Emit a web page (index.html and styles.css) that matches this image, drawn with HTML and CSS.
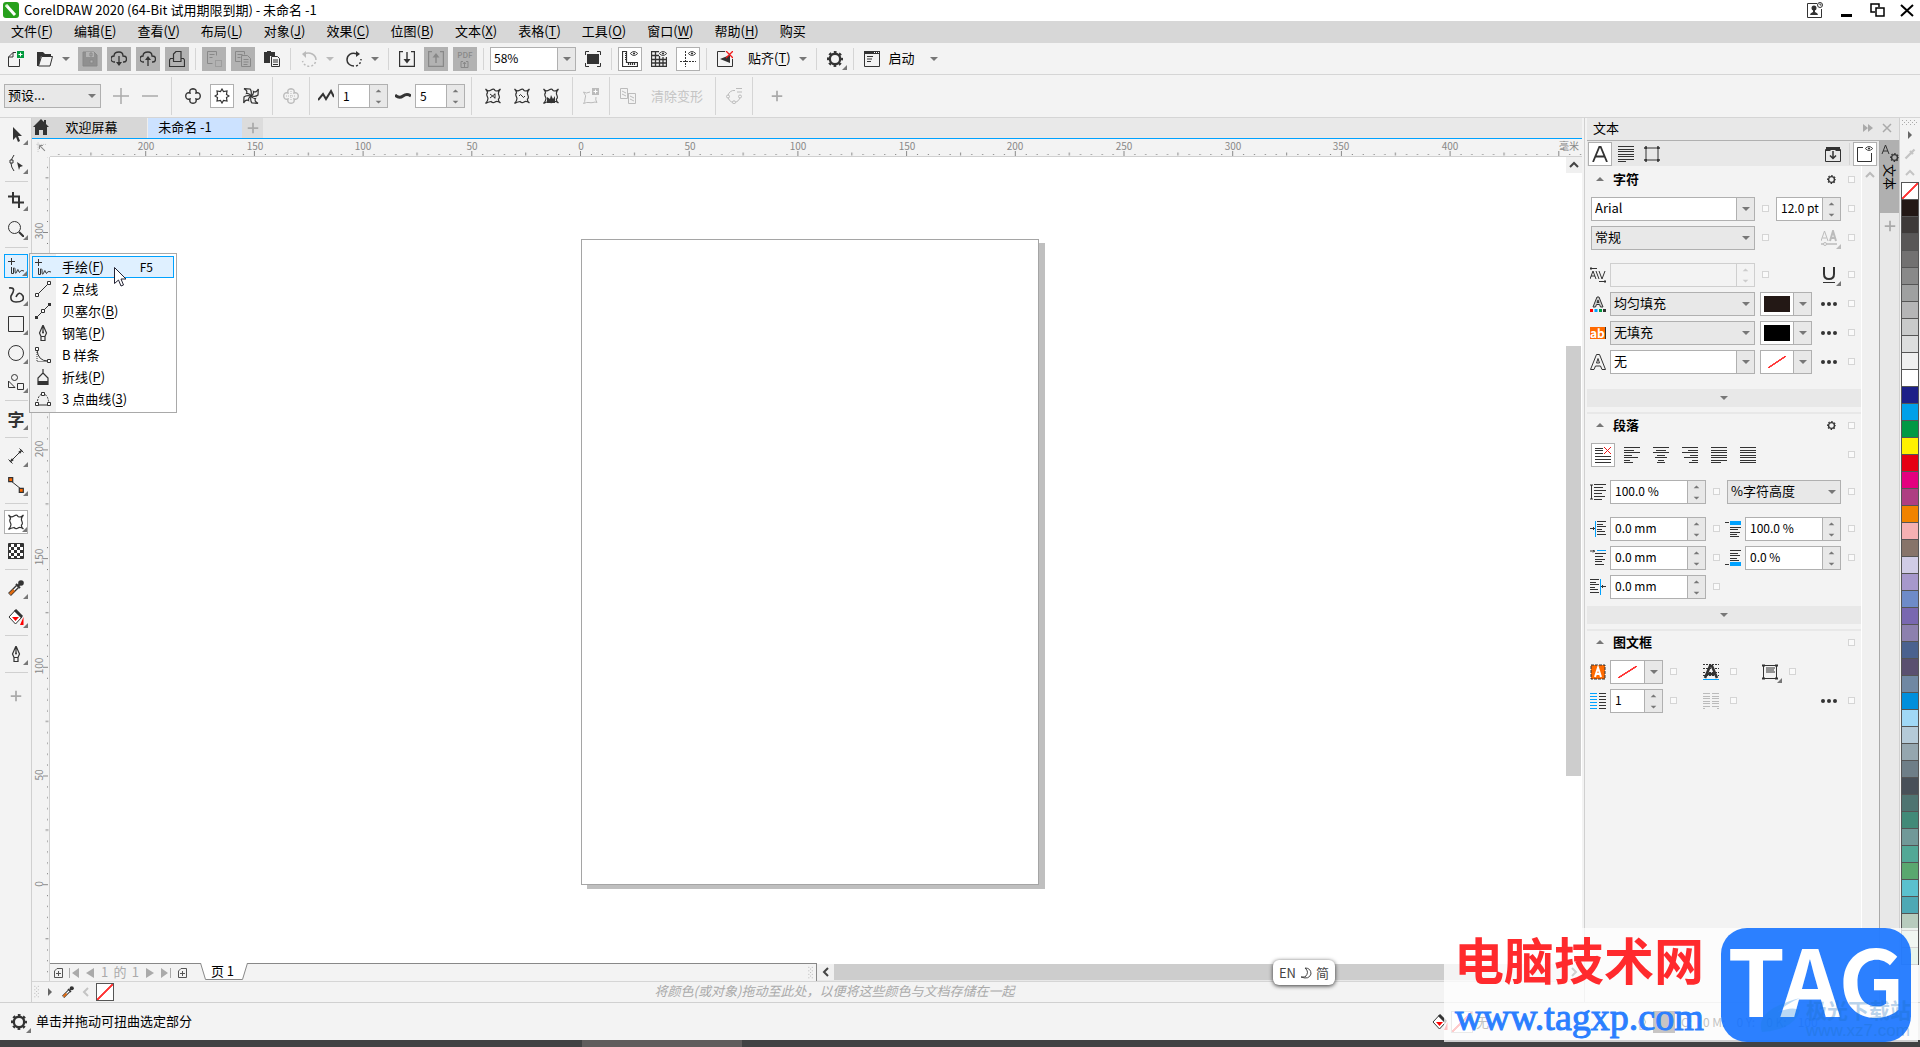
FILE: index.html
```html
<!DOCTYPE html>
<html lang="zh-CN">
<head>
<meta charset="utf-8">
<title>CorelDRAW 2020 (64-Bit 试用期限到期) - 未命名 -1</title>
<link rel="stylesheet" href="styles.css">
</head>
<body>
<svg class="sprite" aria-hidden="true">
  <symbol id="new" viewBox="0 0 16 16"><path d="M8 1.500H5L.5 6v9.500h11V8M5 1.500V6H.5" fill="none" stroke="currentColor"/><path d="M9 0h7v7H9z" fill="#009a3d"/><path d="M12.500 1.500v4M10.500 3.500h4" stroke="#fff"/></symbol>
  <symbol id="open" viewBox="0 0 16 16"><path d="M0 15V1h6l2 2h6v2H4L2 15z" fill="currentColor"/><path d="M4.500 5.500h11l-2.500 9.500H1.500z" fill="#f3f3f3" stroke="currentColor"/></symbol>
  <symbol id="save" viewBox="0 0 16 16"><path d="M1 1h11l3 3v11H1z" fill="#909090" stroke="currentColor"/><path d="M4 1h8v5H4z" fill="#b2b2b2"/><path d="M8 9h3v3H8zM8 2h2v3H8z" fill="#b2b2b2" stroke="currentColor"/></symbol>
  <symbol id="clouddown" viewBox="0 0 16 16"><path d="M4 11H3a3 3 0 0 1 0-6c0-3 2-4 5-4s4 2 4 4c5 0 4 6 1 6h-1M8 5v9" fill="none" stroke="currentColor" stroke-width="1.300"/><path d="M5 11h6l-3 4z" fill="currentColor"/></symbol>
  <symbol id="cloudup" viewBox="0 0 16 16"><path d="M4 11H3a3 3 0 0 1 0-6c0-3 2-4 5-4s4 2 4 4c5 0 4 6 1 6h-1M8 8v7" fill="none" stroke="currentColor" stroke-width="1.300"/><path d="M5 9h6L8 5z" fill="currentColor"/></symbol>
  <symbol id="print" viewBox="0 0 16 16"><path d="M4.500 10.500V3L7 .5h5v10M4.500 7.500h-3L.5 9v6.500h15V9l-1-1.500H12M4 10.500h8.500" fill="none" stroke="currentColor" stroke-width="1.200"/></symbol>
  <symbol id="cut" viewBox="0 0 16 16"><path d="M1.500.5h9v4M1.500.5v12h5M3.500 3.500h5M3.500 6.500h3" fill="none" stroke="currentColor"/><path d="M9.500 9.500h6v6h-6z" fill="none" stroke="currentColor" stroke-dasharray="1 1"/></symbol>
  <symbol id="copy" viewBox="0 0 16 16"><path d="M.5.5h9v3M.5.500v10h5M2.500 3.500h5M2.500 6.500h3M6.500 4.500h6l3 3v8h-9zM8.500 8.500h5M8.500 11h5M8.500 13.500h4" fill="none" stroke="currentColor"/></symbol>
  <symbol id="paste" viewBox="0 0 16 16"><path d="M0 1h3V0h4v1h4v4H6v7H0z" fill="currentColor"/><path d="M7.500 5.500h6l2 2v8h-8zM9 9h5M9 11h5M9 13.500h5" fill="none" stroke="currentColor"/></symbol>
  <symbol id="undo" viewBox="0 0 16 16"><path d="M3 3c6-3 12 1 12 6" fill="none" stroke="currentColor" stroke-width="1.500"/><path d="M14.500 11c-2 6-11 6-13-1" fill="none" stroke="currentColor" stroke-width="1.500" stroke-dasharray="2 2"/><path d="M5 0v7L1 3z" fill="currentColor"/></symbol>
  <symbol id="redo" viewBox="0 0 16 16"><path d="M11 3C5 1 1 4 1 9c0 4 4 6 7 6" fill="none" stroke="currentColor" stroke-width="1.500"/><path d="M10 15c3-1 5-3 5-7" fill="none" stroke="currentColor" stroke-width="1.500" stroke-dasharray="2 2"/><path d="M10 0v6l4-3z" fill="currentColor"/></symbol>
  <symbol id="import" viewBox="0 0 16 16"><path d="M4 .5H.5v15h15V.5H12M8 1v10" fill="none" stroke="currentColor" stroke-width="1.400"/><path d="M4.500 8h7L8 12.500z" fill="currentColor"/></symbol>
  <symbol id="export" viewBox="0 0 16 16"><path d="M4 .5H.5v15h15V.5H12M8 12V4" fill="none" stroke="currentColor" stroke-width="1.400"/><path d="M4.500 6.500h7L8 2z" fill="currentColor"/></symbol>
  <symbol id="full" viewBox="0 0 16 16"><path d="M2 3h12v10H2z" fill="currentColor"/><path d="M.5 4V.5H4M12 .5h3.500V4M15.500 12v3.500H12M4 15.500H.5V12" fill="none" stroke="currentColor"/></symbol>
  <symbol id="eye" viewBox="0 0 8 5"><path d="M.3 2.500Q4-1.500 7.700 2.500 4 6.500.300 2.500z" fill="none" stroke="currentColor" stroke-width=".9"/><circle cx="4" cy="2.500" r="1.100" fill="currentColor"/></symbol>
  <symbol id="rulers" viewBox="0 0 16 16"><path d="M.5.5h4v11h11v4H.5zM3 2.500h2M3 4.500h2M3 6.500h2M3 8.500h2M6.500 12v2M8.500 12v2M10.500 12v2M12.500 12v2" fill="none" stroke="currentColor" stroke-width="1.200"/><use href="#eye" x="8" y="0" width="8" height="5"/></symbol>
  <symbol id="grid" viewBox="0 0 16 16"><path d="M0 .5h8M0 4.500h8M0 8.500h16M0 12h16M0 15.500h16M.5 0v16M4.500 0v16M8.500 5v11M12 6v10M15.500 6v10" fill="none" stroke="currentColor" stroke-width="1.300"/><use href="#eye" x="8" y="0" width="8" height="5"/></symbol>
  <symbol id="guides" viewBox="0 0 16 16"><path d="M5.500 0v16M0 10.500h16" fill="none" stroke="currentColor" stroke-dasharray="2 1"/><use href="#eye" x="8" y="0" width="8" height="5"/></symbol>
  <symbol id="snapoff" viewBox="0 0 16 16"><path d="M8 .5H.5v15h15V8" fill="none" stroke="currentColor"/><path d="M3 8l10-4v8z" fill="currentColor"/><path d="M9 0l7 7M16 0L9 7" stroke="#f01818" stroke-width="1.300"/></symbol>
  <symbol id="gear" viewBox="0 0 16 16"><circle cx="8" cy="8" r="5.200" fill="none" stroke="currentColor" stroke-width="2.400"/><circle cx="8" cy="8" r="6.900" fill="none" stroke="currentColor" stroke-width="2.200" stroke-dasharray="2.700 2.720" stroke-dashoffset="1.350"/></symbol>
  <symbol id="launch" viewBox="0 0 16 16"><path d="M.5.5h15v15H.5z" fill="none" stroke="currentColor"/><path d="M0 0h16v3H0z" fill="currentColor"/><path d="M10 1.500h1m1 0h1m1 0h1" stroke="#fff"/><path d="M3 5.500h6M3 8h5M3 10.500h4" stroke="currentColor"/></symbol>
  <symbol id="plus" viewBox="0 0 16 16"><path d="M8 2v12M2 8h12" stroke="currentColor" stroke-width="2"/></symbol>
  <symbol id="plusthin" viewBox="0 0 16 16"><path d="M8 0v16M0 8h16" stroke="currentColor" stroke-width="1.500"/></symbol>
  <symbol id="minus" viewBox="0 0 16 16"><path d="M0 8h16" stroke="currentColor" stroke-width="1.500"/></symbol>
  <symbol id="push" viewBox="0 0 16 16"><path d="M5 5Q4 1 8 .7 12 1 11 5q4-1 4.300 3-.3 4-4.300 3 1 4-3 4.300Q4 15 5 11 1 12 .7 8 1 4 5 5z" fill="none" stroke="currentColor" stroke-width="1.400"/></symbol>
  <symbol id="zip" viewBox="0 0 16 16"><path d="M8 1l1.500 2.500L13 3l-.5 3.500L15 8l-2.500 1.500L13 13l-3.500-.5L8 15l-1.500-2.500L3 13l.5-3.500L1 8l2.500-1.500L3 3l3.500.5z" fill="none" stroke="currentColor" stroke-width="1.200"/></symbol>
  <symbol id="twist" viewBox="0 0 16 16"><g fill="none" stroke="currentColor" stroke-width="1.200"><path id="blade" d="M8 8Q9 3 7 1L1 .7q4 2 2.500 4.800Q6 5 8 8"/><path d="M8 8Q9 3 7 1L1 .7q4 2 2.500 4.800Q6 5 8 8" transform="rotate(90 8 8)"/><path d="M8 8Q9 3 7 1L1 .7q4 2 2.500 4.800Q6 5 8 8" transform="rotate(180 8 8)"/><path d="M8 8Q9 3 7 1L1 .7q4 2 2.500 4.800Q6 5 8 8" transform="rotate(270 8 8)"/></g></symbol>
  <symbol id="center" viewBox="0 0 16 16"><use href="#push" width="16" height="16"/><path d="M8 3v10M3 8h10" stroke="currentColor" stroke-dasharray="1 1"/></symbol>
  <symbol id="amp" viewBox="0 0 16 16"><path d="M0 12l5-6 3 5 5-8 3 6" fill="none" stroke="currentColor" stroke-width="2"/></symbol>
  <symbol id="freq" viewBox="0 0 16 16"><path d="M0 7q4 4 8 1t8 0" fill="none" stroke="currentColor" stroke-width="3"/></symbol>
  <symbol id="blob" viewBox="0 0 16 16"><path d="M.5 1Q3 4 6 2T10 2.500Q13 4 15.500 1 12.500 4 13.800 7T13.500 11Q13 13 15.500 15 12 12.500 10 14T6 13.500Q3 14 .5 15.500 4 12 2.500 9T2.500 5Q2.500 3 .5 1z" fill="none" stroke="currentColor" stroke-width="1.200"/></symbol>
  <symbol id="rand" viewBox="0 0 16 16"><use href="#blob" width="16" height="16"/><path d="M5 6l5 4M5 10l5-4M10 5.500v5" stroke="currentColor"/></symbol>
  <symbol id="smooth" viewBox="0 0 16 16"><use href="#blob" width="16" height="16"/><path d="M5 8q1.500-3 3 0t3 0" fill="none" stroke="currentColor"/></symbol>
  <symbol id="local" viewBox="0 0 16 16"><use href="#blob" width="16" height="16"/><path d="M4 15V9l3 2 1-4 2 4 2-3v7z" fill="currentColor"/></symbol>
  <symbol id="addblob" viewBox="0 0 16 16"><path d="M.5 4Q3 6 7 4M.5 4Q4 8 2 11q0 3-1.500 4.500Q4 14 6 14.500t4 0q2-1 4 0Q12 12 13 9" fill="none" stroke="currentColor"/><path d="M9 0h7v7H9z" fill="currentColor"/><path d="M12.500 1.500v4M10.500 3.500h4" stroke="#fff"/></symbol>
  <symbol id="copyfx" viewBox="0 0 16 16"><path d="M.5.5h7v10h-7zM8 5.500h7.500v10h-7V5.500M2 3l4 2M2 6l4 2M10 8l4 2M10 11l4 2" fill="none" stroke="currentColor"/></symbol>
  <symbol id="convert" viewBox="0 0 16 16"><path d="M9 2.500A6 6 0 1 0 14 8.500M10 .5h6M11 4h5" fill="none" stroke="currentColor"/><circle cx="2" cy="8.500" r="1.500" fill="#f3f3f3" stroke="currentColor"/><circle cx="8" cy="14.300" r="1.500" fill="#f3f3f3" stroke="currentColor"/><circle cx="14" cy="8.500" r="1.500" fill="#f3f3f3" stroke="currentColor"/></symbol>
  <symbol id="pick" viewBox="0 0 16 16"><path d="M5 1v13l3-3 2 5 2-1-2-5h4z" fill="currentColor"/></symbol>
  <symbol id="shape" viewBox="0 0 16 16"><path d="M6 0Q0 8 6 16" fill="none" stroke="currentColor"/><path d="M2 5h3v3H2z" fill="#f3f3f3" stroke="currentColor"/><path d="M9 7l6 4-3 1-1 3z" fill="currentColor"/></symbol>
  <symbol id="crop" viewBox="0 0 16 16"><path d="M5 0v10.500h11M0 4.500h11V16" fill="none" stroke="currentColor" stroke-width="2"/></symbol>
  <symbol id="zoom" viewBox="0 0 16 16"><circle cx="6.500" cy="6.500" r="6" fill="none" stroke="currentColor"/><path d="M11 11l5 5" stroke="currentColor" stroke-width="2"/></symbol>
  <symbol id="freehand" viewBox="0 0 16 16"><path d="M3.500 0v7M0 3.500h7M3.500 9v6.500h2V10q2-1 1.500 4 1 3 2-1 1-3 1.500 0 1 3 2 0 1-1 3.500 0" fill="none" stroke="currentColor"/></symbol>
  <symbol id="artistic" viewBox="0 0 16 16"><path d="M1 1q8-1 2 8-1 6 5 6 9 0 7-6-4-6-7 1" fill="none" stroke="currentColor" stroke-width="1.600"/></symbol>
  <symbol id="rect" viewBox="0 0 16 16"><path d="M.5.5h15v15H.5z" fill="none" stroke="currentColor"/></symbol>
  <symbol id="ellipse" viewBox="0 0 16 16"><circle cx="8" cy="8" r="7.500" fill="none" stroke="currentColor"/></symbol>
  <symbol id="shapes" viewBox="0 0 16 16"><circle cx="6.500" cy="3.500" r="3" fill="none" stroke="currentColor"/><path d="M.5 7v6.500H7zM9.500 9.500h6v6h-6z" fill="none" stroke="currentColor"/></symbol>
  <symbol id="dim" viewBox="0 0 16 16"><path d="M2 14L14 2M.5 11.500l4 4M11.500.5l4 4M2 14l2-3.500M2 14l3.500-2M14 2l-3.500 2M14 2l-2 3.500" fill="none" stroke="currentColor"/></symbol>
  <symbol id="connector" viewBox="0 0 16 16"><path d="M3 4l10 8" stroke="currentColor"/><path d="M.7.700h4v4h-4zM11.300 11.300h4v4h-4z" fill="#ff6a00" stroke="currentColor" stroke-width="1.200"/></symbol>
  <symbol id="checker" viewBox="0 0 16 16"><path d="M.5.5h15v15H.5z" fill="#fff" stroke="currentColor"/><path d="M0 2.500h16M0 8.500h16M0 14.500h16" stroke="currentColor" stroke-width="3" stroke-dasharray="3 3"/><path d="M3 5.500h13M3 11.500h13" stroke="currentColor" stroke-width="3" stroke-dasharray="3 3"/></symbol>
  <symbol id="dropper" viewBox="0 0 16 16"><path d="M1.500 14.500l8-8" stroke="currentColor" stroke-width="4"/><path d="M2 14l8-8" stroke="#fff" stroke-width="1.500"/><path d="M2 14l4-4" stroke="#e06a10" stroke-width="2.500"/><path d="M8 4l4 4M10 6l3-3" stroke="currentColor" stroke-width="2"/><circle cx="13" cy="3" r="2.800" fill="currentColor"/></symbol>
  <symbol id="dropperflat" viewBox="0 0 16 16"><path d="M2 14l8-8M8 4l4 4M10 6l4-4" stroke="currentColor" stroke-width="3"/></symbol>
  <symbol id="bucket" viewBox="0 0 16 16"><path d="M7.500 1L14 8l-6.500 7L1 8z" fill="#fff" stroke="currentColor"/><path d="M7 1l7 7" stroke="currentColor" stroke-width="3"/><path d="M4 8h7l-3.500 4z" fill="#f00"/><path d="M15.500 8v8H12z" fill="#f00"/></symbol>
  <symbol id="nib" viewBox="0 0 16 16"><path d="M8 0L4.500 8 6 11.500h4L11.500 8zM8 1v6M6 11.500v4h4v-4" fill="none" stroke="currentColor" stroke-width="1.200"/><circle cx="8" cy="7.500" r="1" fill="currentColor"/></symbol>
  <symbol id="line2" viewBox="0 0 16 16"><path d="M3 13L13 3" stroke="currentColor"/><path d="M.5 12.500h3v3h-3zM12.500.5h3v3h-3z" fill="#fff" stroke="currentColor"/></symbol>
  <symbol id="bezier" viewBox="0 0 16 16"><path d="M2 14L14 2" stroke="currentColor"/><path d="M0 13h3v3H0zM13 0h3v3h-3z" fill="currentColor"/><path d="M6.500 6.500h3v3h-3z" fill="#fff" stroke="currentColor"/></symbol>
  <symbol id="bspline" viewBox="0 0 16 16"><path d="M2 3q1 11 11 11" fill="none" stroke="currentColor"/><path d="M2 3v11.500h11" fill="none" stroke="currentColor" stroke-dasharray="1 1"/><path d="M.5.5h3v3h-3zM12.500 12.500h3v3h-3z" fill="#fff" stroke="currentColor"/></symbol>
  <symbol id="polyline" viewBox="0 0 16 16"><path d="M8 0v4L3 9v6.500h10V9L8 4" fill="none" stroke="currentColor" stroke-width="1.200"/><path d="M3 12h10v4H3z" fill="currentColor"/></symbol>
  <symbol id="curve3" viewBox="0 0 16 16"><path d="M2 13Q3 3 8 3t6 10" fill="none" stroke="currentColor" stroke-dasharray="2 1"/><path d="M3 14h10" stroke="currentColor"/><path d="M.5 11.500h3v3h-3zM12.500 11.500h3v3h-3zM6.500 1.500h3v3h-3z" fill="#fff" stroke="currentColor"/></symbol>
  <symbol id="home" viewBox="0 0 16 16"><path d="M8 0L0 8h2v8h4v-5h4v5h4V8h2l-3-3V1h-2v2z" fill="currentColor"/></symbol>
  <symbol id="origin" viewBox="0 0 16 16"><path d="M3 1v14M1 3.500h14" stroke="currentColor" stroke-dasharray="1 2"/><path d="M5 5l8 8M5 5v5M5 5h5" stroke="currentColor" stroke-width="1.500" fill="none"/></symbol>
  <symbol id="chevup" viewBox="0 0 10 10"><path d="M1 7l4-4 4 4" fill="none" stroke="currentColor" stroke-width="2"/></symbol>
  <symbol id="chevleft" viewBox="0 0 10 10"><path d="M7 1L3 5l4 4" fill="none" stroke="currentColor" stroke-width="2"/></symbol>
  <symbol id="chevright" viewBox="0 0 10 10"><path d="M3 1l4 4-4 4" fill="none" stroke="currentColor" stroke-width="2"/></symbol>
  <symbol id="triright" viewBox="0 0 10 10"><path d="M3 1v8l4-4z" fill="currentColor"/></symbol>
  <symbol id="prev" viewBox="0 0 12 12"><path d="M10 1v10L2 6z" fill="currentColor"/></symbol>
  <symbol id="next" viewBox="0 0 12 12"><path d="M2 1v10l8-5z" fill="currentColor"/></symbol>
  <symbol id="first" viewBox="0 0 12 12"><path d="M11 1v10L4 6zM1 1h1v10H1z" fill="currentColor"/></symbol>
  <symbol id="last" viewBox="0 0 12 12"><path d="M1 1v10l7-5zM10 1h1v10h-1z" fill="currentColor"/></symbol>
  <symbol id="addpage" viewBox="0 0 12 12"><path d="M5 1.500h5.500v9h-8V4zM6.500 4v5M4 6.500h5" fill="none" stroke="currentColor"/></symbol>
  <symbol id="bigA" viewBox="0 0 16 16"><path d="M1 16L7.300 1h1.400L15 16M3.500 10.500h9" fill="none" stroke="currentColor" stroke-width="1.800"/></symbol>
  <symbol id="para" viewBox="0 0 16 16"><path d="M0 .5h16M0 3.500h16M0 5.500h16M0 8.500h16M0 10.500h16M0 13.500h16M0 15.500h8" stroke="currentColor"/></symbol>
  <symbol id="frame" viewBox="0 0 16 16"><path d="M2 2h12v12H2z" fill="none" stroke="currentColor"/><path d="M0 2h3M2 0v3M13 2h3M14 0v3M0 14h3M2 13v3M13 14h3M14 13v3" stroke="currentColor" stroke-width="1.500"/></symbol>
  <symbol id="dockin" viewBox="0 0 16 16"><path d="M.5 3.500h15v12H.5z" fill="none" stroke="currentColor"/><path d="M1 1h14v4h-4L9 3H7L5 5H1z" fill="currentColor"/><path d="M8 5v7M5 9.500l3 3 3-3" fill="none" stroke="currentColor" stroke-width="1.500"/></symbol>
  <symbol id="boxeye" viewBox="0 0 16 16"><path d="M6 1.500H.5v14h14V7" fill="none" stroke="currentColor"/><use href="#eye" x="8" y="0" width="8" height="5"/></symbol>
  <symbol id="kern" viewBox="0 0 16 16"><path d="M0 12L3 4l3 8M1 9h4M9 4l3 8 3-8M6 4l3 8M0 1.500h7M1.500 0L0 1.500 1.500 3M16 14.500H9M14.500 13l1.500 1.500-1.500 1.500" fill="none" stroke="currentColor"/></symbol>
  <symbol id="fillA" viewBox="0 0 16 16"><path d="M3 11L7 1h2l4 10h-2.500L9.500 8.500h-3L5.500 11zM7 6.500h2L8 4z" fill="#ccc" stroke="currentColor"/><path d="M0 13h3v3H0z" fill="#f00"/><path d="M4.500 13h3v3h-3z" fill="#00a2ff"/><path d="M9 13h3v3H9z" fill="#009a3d"/><path d="M13 13h3v3h-3z" fill="#333"/></symbol>
  <symbol id="lineA" viewBox="0 0 16 16"><path d="M.5 15.500L6.500.5h3l6 15h-3.500L10.500 12h-5L4 15.500zM6.500 9h3L8 4.500z" fill="none" stroke="currentColor"/></symbol>
  <symbol id="under" viewBox="0 0 16 16"><path d="M3 0v7q0 5 5 5t5-5V0" fill="none" stroke="currentColor" stroke-width="2"/><path d="M2 15.500h12" stroke="currentColor"/></symbol>
  <symbol id="AA" viewBox="0 0 16 16"><path d="M0 11L3.500 1 7 11M1.500 8h4" fill="none" stroke="currentColor"/><path d="M9 11l3-10 3 10M10 8h4" fill="none" stroke="currentColor" stroke-width="2"/><path d="M0 14h16" stroke="currentColor" stroke-width="1.500"/><circle cx="4" cy="14" r="1.500" fill="#f3f3f3" stroke="currentColor"/></symbol>
  <symbol id="dots" viewBox="0 0 16 16"><circle cx="2" cy="8" r="2" fill="currentColor"/><circle cx="8" cy="8" r="2" fill="currentColor"/><circle cx="14" cy="8" r="2" fill="currentColor"/></symbol>
  <symbol id="alnone" viewBox="0 0 16 16"><path d="M0 1.500h8M0 3.500h8M0 6.500h8M0 9.500h16M0 12.500h16M0 15.500h16" stroke="currentColor"/><path d="M9 0l7 7M16 0L9 7" stroke="#f01818"/></symbol>
  <symbol id="alleft" viewBox="0 0 16 16"><path d="M0 .5h16M0 3.500h10M0 5.500h16M0 8.500h8M0 10.500h14M0 13.500h6M0 15.500h9" stroke="currentColor"/></symbol>
  <symbol id="alcenter" viewBox="0 0 16 16"><path d="M0 .5h16M3 3.500h10M0 5.500h16M4 8.500h8M2 10.500h12M5 13.500h6M4 15.500h8" stroke="currentColor"/></symbol>
  <symbol id="alright" viewBox="0 0 16 16"><path d="M0 .5h16M6 3.500h10M0 5.500h16M8 8.500h8M2 10.500h14M10 13.500h6M7 15.500h9" stroke="currentColor"/></symbol>
  <symbol id="alfull" viewBox="0 0 16 16"><path d="M0 .5h16M0 3.500h16M0 5.500h16M0 8.500h16M0 10.500h16M0 13.500h16M0 15.500h10" stroke="currentColor"/></symbol>
  <symbol id="alforce" viewBox="0 0 16 16"><path d="M0 .5h16M0 3.500h16M0 5.500h16M0 8.500h16M0 10.500h16M0 13.500h16M0 15.500h16" stroke="currentColor"/></symbol>
  <symbol id="leading" viewBox="0 0 16 16"><path d="M1.500 1v14M0 1h3M0 15h3M4 .5h12M4 3.500h9M4 6.500h12M4 9.500h8M4 12.500h11M4 15.500h8" fill="none" stroke="currentColor"/></symbol>
  <symbol id="indl" viewBox="0 0 16 16"><path d="M7 .5h9M7 3.500h6M7 5.500h9M7 8.500h5M7 10.500h8M7 13.500h9M0 7.500h5M3 6l1.500 1.500L3 9" fill="none" stroke="currentColor"/><path d="M5.500 0v16" stroke="#00a2ff"/></symbol>
  <symbol id="indf" viewBox="0 0 16 16"><path d="M5 3.500h11M5 6.500h8M5 9.500h10M5 11.500h7M5 14.500h9M0 1h5M3 0l1.500 1L3 2.500" fill="none" stroke="currentColor"/><path d="M7 .5h9" stroke="#00a2ff"/></symbol>
  <symbol id="indr" viewBox="0 0 16 16"><path d="M0 .5h9M0 3.500h6M0 5.500h9M0 8.500h5M0 10.500h8M0 13.500h9M11 7.500h5M13 6l-1.500 1.500L13 9" fill="none" stroke="currentColor"/><path d="M10.500 0v16" stroke="#00a2ff"/></symbol>
  <symbol id="spb" viewBox="0 0 16 16"><path d="M5 6.500h11M5 8.500h8M5 11.500h10M5 13.500h7M5 15.500h9M0 1.500h4" stroke="currentColor"/><path d="M5 0h11v4H5z" fill="#00a2ff"/></symbol>
  <symbol id="spa" viewBox="0 0 16 16"><path d="M5 .5h11M5 3.500h8M5 5.500h10M5 8.500h7M5 10.500h9M0 14.500h4" stroke="currentColor"/><path d="M5 12h11v4H5z" fill="#00a2ff"/></symbol>
  <symbol id="frfill" viewBox="0 0 16 16"><path d="M1 1h14v14H1z" fill="#ff6a00" stroke="currentColor" stroke-dasharray="3 1"/><path d="M5 13L8 3.500 11 13M6 10h4" fill="none" stroke="#fff" stroke-width="2"/></symbol>
  <symbol id="baseA" viewBox="0 0 16 16"><path d="M0 .5h16M0 4.500h16M0 8.500h16M0 11.500h16" stroke="currentColor" stroke-dasharray="2 1"/><path d="M2 14L7 2h2l5 12M4 10h8" fill="none" stroke="currentColor" stroke-width="2.600"/><path d="M0 15.500h16" stroke="#00a2ff"/></symbol>
  <symbol id="valign" viewBox="0 0 16 16"><path d="M1.500 1.500h13v13h-13zM4 4h9M4 6h8M4 8h9" fill="none" stroke="currentColor"/><path d="M0 1.500h3M13 1.500h3M0 14.500h3M13 14.500h3" stroke="currentColor" stroke-width="2"/></symbol>
  <symbol id="cols" viewBox="0 0 16 16"><path d="M0 .5h7M0 3.500h7M0 6.500h7M0 9.500h7M0 12.500h7M0 15.500h7" stroke="#00a2ff"/><path d="M9 .5h7M9 3.500h7M9 6.500h7M9 9.500h7M9 12.500h7M9 15.500h7" stroke="currentColor"/></symbol>
  <symbol id="cols2" viewBox="0 0 16 16"><path d="M0 .5h7M0 3.500h7M0 5.500h7M0 8.500h7M0 10.500h7M0 13.500h7M0 15.500h2M9 .5h7M9 3.500h7M9 5.500h7M9 8.500h7M9 10.500h7M9 13.500h7M14 15.500h2" stroke="currentColor"/></symbol>
  <symbol id="tri" viewBox="0 0 8 4"><path d="M0 0h8L4 4z" fill="currentColor"/></symbol>
  <symbol id="triup" viewBox="0 0 8 4"><path d="M0 4h8L4 0z" fill="currentColor"/></symbol>
  <symbol id="spin" viewBox="0 0 18 22"><path d="M6 7h6L9 4zM6 16h6l-3 3z" fill="currentColor"/></symbol>
  <symbol id="user" viewBox="0 0 16 16"><path d="M10 1.500H.5v14h14V7" fill="none" stroke="currentColor"/><circle cx="7" cy="6" r="2.500" fill="currentColor"/><path d="M3 13q0-2 3-3V8h2v2q3 1 3 3z" fill="currentColor"/><circle cx="13" cy="3" r="2.500" fill="#fff" stroke="currentColor"/><path d="M13 1.500V3h1.500" fill="none" stroke="currentColor"/></symbol>
  <symbol id="grip" viewBox="0 0 6 16"><path d="M.5 1v15M4.500 1v15" stroke="currentColor" stroke-dasharray="1 3"/><path d="M2.500 3v12" stroke="currentColor" stroke-dasharray="1 3"/></symbol>
</svg>

<header class="titlebar">
  <svg class="logo" viewBox="0 0 16 16"><rect width="16" height="16" rx="3" fill="#27a01c"/><path d="M3 3l9 10" stroke="#fff" stroke-width="3"/><path d="M2.500 2.500l3 1-2 2z" fill="#d8f5d0"/></svg>
  <h1>CorelDRAW 2020 (64-Bit 试用期限到期) - 未命名 -1</h1>
  <div class="winbtns">
    <button aria-label="用户"><svg class="i"><use href="#user"/></svg></button>
    <button aria-label="最小化"><svg class="i" viewBox="0 0 16 16"><path d="M3 13.500h11" stroke="#000" stroke-width="3"/></svg></button>
    <button aria-label="还原"><svg class="i" viewBox="0 0 16 16"><path d="M6 10H2V2h8v3M7 6h8v8H7z" fill="none" stroke="#000" stroke-width="1.500"/></svg></button>
    <button aria-label="关闭"><svg class="i" viewBox="0 0 16 16"><path d="M1 3l12 11M13 3L1 14" stroke="#000" stroke-width="2"/></svg></button>
  </div>
</header>

<nav class="menubar">
  <a href="#">文件(<u>F</u>)</a><a href="#">编辑(<u>E</u>)</a><a href="#">查看(<u>V</u>)</a><a href="#">布局(<u>L</u>)</a><a href="#">对象(<u>J</u>)</a><a href="#">效果(<u>C</u>)</a><a href="#">位图(<u>B</u>)</a><a href="#">文本(<u>X</u>)</a><a href="#">表格(<u>T</u>)</a><a href="#">工具(<u>O</u>)</a><a href="#">窗口(<u>W</u>)</a><a href="#">帮助(<u>H</u>)</a><a href="#">购买</a>
</nav>

<div class="toolbar std">
  <button class="b" aria-label="新建"><svg class="i"><use href="#new"/></svg></button>
  <button class="b" aria-label="打开"><svg class="i"><use href="#open"/></svg></button>
  <button class="caret" aria-label="最近文件"><svg><use href="#tri"/></svg></button>
  <button class="b dark off" aria-label="保存"><svg class="i"><use href="#save"/></svg></button>
  <button class="b dark" aria-label="从云打开"><svg class="i"><use href="#clouddown"/></svg></button>
  <button class="b dark" aria-label="保存到云"><svg class="i"><use href="#cloudup"/></svg></button>
  <button class="b dark" aria-label="打印"><svg class="i"><use href="#print"/></svg></button>
  <i class="sep"></i>
  <button class="b dark off" aria-label="剪切"><svg class="i"><use href="#cut"/></svg></button>
  <button class="b dark off" aria-label="复制"><svg class="i"><use href="#copy"/></svg></button>
  <button class="b" aria-label="粘贴"><svg class="i"><use href="#paste"/></svg></button>
  <i class="sep"></i>
  <button class="b faint" aria-label="撤消"><svg class="i"><use href="#undo"/></svg></button>
  <button class="caret faint" aria-label="撤消列表"><svg><use href="#tri"/></svg></button>
  <button class="b" aria-label="重做"><svg class="i"><use href="#redo"/></svg></button>
  <button class="caret" aria-label="重做列表"><svg><use href="#tri"/></svg></button>
  <i class="sep"></i>
  <button class="b" aria-label="导入"><svg class="i"><use href="#import"/></svg></button>
  <button class="b dark off" aria-label="导出"><svg class="i"><use href="#export"/></svg></button>
  <button class="b dark off pdf" aria-label="发布为 PDF"><span>PDF</span><svg viewBox="0 0 10 8"><path d="M3 1.500H1v6h7v-6H6M4.500 7V2M3 4l1.500-2L6 4" fill="none" stroke="currentColor"/></svg></button>
  <i class="sep"></i>
  <div class="combo split zoomlevel"><select aria-label="缩放级别"><option>58%</option></select><span><svg><use href="#tri"/></svg></span></div>
  <button class="b" aria-label="全屏预览"><svg class="i"><use href="#full"/></svg></button>
  <i class="sep"></i>
  <button class="b on" aria-label="显示标尺"><svg class="i"><use href="#rulers"/></svg></button>
  <button class="b" aria-label="显示网格"><svg class="i"><use href="#grid"/></svg></button>
  <button class="b on" aria-label="显示辅助线"><svg class="i"><use href="#guides"/></svg></button>
  <i class="sep"></i>
  <button class="b" aria-label="关闭贴齐"><svg class="i"><use href="#snapoff"/></svg></button>
  <button class="t snap">贴齐(<u>T</u>)</button>
  <button class="caret" aria-label="贴齐选项"><svg><use href="#tri"/></svg></button>
  <i class="sep"></i>
  <button class="b fly" aria-label="选项"><svg class="i"><use href="#gear"/></svg></button>
  <i class="sep"></i>
  <button class="b" aria-label="应用程序"><svg class="i"><use href="#launch"/></svg></button>
  <button class="t launch">启动</button>
  <button class="caret" aria-label="启动列表"><svg><use href="#tri"/></svg></button>
</div>

<div class="toolbar prop">
  <div class="combo preset"><select aria-label="预设"><option>预设...</option></select><span><svg><use href="#tri"/></svg></span></div>
  <button class="b grey ml" aria-label="添加预设"><svg class="i"><use href="#plusthin"/></svg></button>
  <button class="b grey" aria-label="删除预设"><svg class="i"><use href="#minus"/></svg></button>
  <i class="sep ml mr"></i>
  <button class="b" aria-label="推拉变形"><svg class="i"><use href="#push"/></svg></button>
  <button class="b on" aria-label="拉链变形"><svg class="i"><use href="#zip"/></svg></button>
  <button class="b" aria-label="扭曲变形"><svg class="i"><use href="#twist"/></svg></button>
  <i class="sep ml"></i>
  <button class="b faint" aria-label="居中变形"><svg class="i"><use href="#center"/></svg></button>
  <i class="sep"></i>
  <label class="spinfield"><svg class="i"><use href="#amp"/></svg><span class="num"><input value="1" aria-label="拉链振幅"><svg><use href="#spin"/></svg></span></label>
  <label class="spinfield"><svg class="i"><use href="#freq"/></svg><span class="num"><input value="5" aria-label="拉链频率"><svg><use href="#spin"/></svg></span></label>
  <i class="sep mr"></i>
  <button class="b" aria-label="随机变形"><svg class="i"><use href="#rand"/></svg></button>
  <button class="b" aria-label="平滑变形"><svg class="i"><use href="#smooth"/></svg></button>
  <button class="b" aria-label="局限变形"><svg class="i"><use href="#local"/></svg></button>
  <i class="sep ml"></i>
  <button class="b faint" aria-label="添加新的变形"><svg class="i"><use href="#addblob"/></svg></button>
  <i class="sep"></i>
  <button class="b faint" aria-label="复制变形属性"><svg class="i"><use href="#copyfx"/></svg></button>
  <button class="t padded" disabled>清除变形</button>
  <i class="sep"></i>
  <button class="b faint" aria-label="转换为曲线"><svg class="i"><use href="#convert"/></svg></button>
  <i class="sep mr"></i>
  <button class="b grey ml" aria-label="自定义"><svg class="i small"><use href="#plus"/></svg></button>
</div>

<main class="work">
  <aside class="toolbox">
    <button class="b fly" aria-label="选择工具"><svg class="i"><use href="#pick"/></svg></button>
    <button class="b fly" aria-label="形状工具"><svg class="i"><use href="#shape"/></svg></button>
    <hr>
    <button class="b fly" aria-label="裁剪工具"><svg class="i"><use href="#crop"/></svg></button>
    <button class="b fly" aria-label="缩放工具"><svg class="i"><use href="#zoom"/></svg></button>
    <hr>
    <div class="flyhost">
      <button class="b fly hot" aria-label="手绘工具"><svg class="i"><use href="#freehand"/></svg></button>
      <ul class="flyout">
        <li class="sel"><svg class="i"><use href="#freehand"/></svg><a href="#">手绘(<u>F</u>)</a><kbd>F5</kbd></li>
        <li><svg class="i"><use href="#line2"/></svg><a href="#">2 点线</a></li>
        <li><svg class="i"><use href="#bezier"/></svg><a href="#">贝塞尔(<u>B</u>)</a></li>
        <li><svg class="i"><use href="#nib"/></svg><a href="#">钢笔(<u>P</u>)</a></li>
        <li><svg class="i"><use href="#bspline"/></svg><a href="#">B 样条</a></li>
        <li><svg class="i"><use href="#polyline"/></svg><a href="#">折线(<u>P</u>)</a></li>
        <li><svg class="i"><use href="#curve3"/></svg><a href="#">3 点曲线(<u>3</u>)</a></li>
      </ul>
      <svg class="cursor" viewBox="0 0 13 20"><path d="M.5.5v16l4-3.500 2.500 6 2.500-1-2.500-6h5z" fill="#fff" stroke="#223"/></svg>
    </div>
    <button class="b fly" aria-label="艺术笔"><svg class="i"><use href="#artistic"/></svg></button>
    <button class="b fly" aria-label="矩形工具"><svg class="i"><use href="#rect"/></svg></button>
    <button class="b fly" aria-label="椭圆形工具"><svg class="i"><use href="#ellipse"/></svg></button>
    <button class="b fly" aria-label="常见形状"><svg class="i"><use href="#shapes"/></svg></button>
    <hr>
    <button class="b fly glyph" aria-label="文本工具">字</button>
    <hr>
    <button class="b fly" aria-label="平行度量"><svg class="i"><use href="#dim"/></svg></button>
    <button class="b fly" aria-label="连接器"><svg class="i"><use href="#connector"/></svg></button>
    <hr>
    <button class="b fly on" aria-label="变形工具"><svg class="i"><use href="#blob"/></svg></button>
    <button class="b" aria-label="透明度工具"><svg class="i"><use href="#checker"/></svg></button>
    <hr>
    <button class="b fly" aria-label="颜色滴管"><svg class="i"><use href="#dropper"/></svg></button>
    <button class="b fly" aria-label="填充工具"><svg class="i"><use href="#bucket"/></svg></button>
    <hr>
    <button class="b fly" aria-label="轮廓笔"><svg class="i"><use href="#nib"/></svg></button>
    <hr>
    <button class="b grey add" aria-label="自定义工具箱"><svg class="i small"><use href="#plus"/></svg></button>
  </aside>

  <section class="doc">
    <div class="tabs">
      <button class="home" aria-label="主页"><svg class="i"><use href="#home"/></svg></button>
      <button class="tab">欢迎屏幕</button>
      <button class="tab active">未命名 -1</button>
      <button class="tabadd" aria-label="新建标签"><svg class="i small"><use href="#plus"/></svg></button>
    </div>
    <div class="stage">
      <svg class="corner"><use href="#origin" x="4" y="3" width="11" height="11"/></svg>
      <svg class="hruler">
        <defs><pattern id="ht" x="530" y="0" width="108.700" height="18" patternUnits="userSpaceOnUse"><path d="M.5 12v5M54.500 13.500v3" stroke="#888"/><path d="M10.900 15.500h1m9.870 0h1m9.870 0h1m9.870 0h1m20.700 0h1m9.870 0h1m9.870 0h1m9.870 0h1" stroke="#777"/></pattern></defs>
        <rect width="100%" height="18" fill="url(#ht)"/>
        <g class="nums"><text x="96" y="11">200</text><text x="205" y="11">150</text><text x="313" y="11">100</text><text x="422" y="11">50</text><text x="531" y="11">0</text><text x="640" y="11">50</text><text x="748" y="11">100</text><text x="857" y="11">150</text><text x="965" y="11">200</text><text x="1074" y="11">250</text><text x="1183" y="11">300</text><text x="1291" y="11">350</text><text x="1400" y="11">400</text><text x="1519" y="11">毫米</text></g>
      </svg>
      <svg class="vruler">
        <defs><pattern id="vt" x="0" y="75" width="18" height="108.700" patternUnits="userSpaceOnUse"><path d="M11 .5h5M13.500 54.500h3" stroke="#888"/><path d="M15.500 10.900v1m0 9.870v1m0 9.870v1m0 9.870v1m0 20.700v1m0 9.870v1m0 9.870v1m0 9.870v1" stroke="#777"/></pattern></defs>
        <rect width="18" height="100%" fill="url(#vt)"/>
        <g class="nums"><text transform="translate(11 74) rotate(-90)">300</text><text transform="translate(11 183) rotate(-90)">250</text><text transform="translate(11 292) rotate(-90)">200</text><text transform="translate(11 400) rotate(-90)">150</text><text transform="translate(11 509) rotate(-90)">100</text><text transform="translate(11 618) rotate(-90)">50</text><text transform="translate(11 727) rotate(-90)">0</text></g>
      </svg>
      <div class="canvas"><div class="page"></div></div>
      <div class="vscroll"><button aria-label="向上"><svg><use href="#chevup"/></svg></button><i></i></div>
      <div class="bottom">
        <div class="pages">
          <button class="d" aria-label="在前添加页"><svg><use href="#addpage"/></svg></button>
          <button aria-label="首页"><svg><use href="#first"/></svg></button>
          <button aria-label="上一页"><svg><use href="#prev"/></svg></button>
          <div class="count"><span>1</span><span>的</span><span>1</span></div>
          <button aria-label="下一页"><svg><use href="#next"/></svg></button>
          <button aria-label="末页"><svg><use href="#last"/></svg></button>
          <button class="d" aria-label="在后添加页"><svg><use href="#addpage"/></svg></button>
          <button class="pagetab"><svg viewBox="0 0 49 18"><path d="M.5 0l5 16.500h37L47.500 0" fill="#fff" stroke="#888"/></svg><span>页 1</span></button>
          <svg class="grip"><use href="#grip"/></svg>
        </div>
        <div class="hscroll"><button aria-label="向左"><svg><use href="#chevleft"/></svg></button><i></i><button aria-label="向右"><svg><use href="#chevright"/></svg></button></div>
      </div>
    </div>
    <div class="docpal">
      <svg class="grip"><use href="#grip"/></svg>
      <button aria-label="调色板选项"><svg class="g7"><use href="#triright"/></svg></button>
      <button aria-label="滴管"><svg class="drop"><use href="#dropper"/></svg></button>
      <button aria-label="向左滚动"><svg class="gc"><use href="#chevleft"/></svg></button>
      <button class="none" aria-label="无填充"></button>
      <p>将颜色(或对象)拖动至此处，以便将这些颜色与文档存储在一起</p>
    </div>
  </section>

  <aside class="docker">
    <div class="dhead"><h2>文本</h2><button aria-label="折叠"><svg viewBox="0 0 10 10"><path d="M0 1v8l5-4zM5 1v8l5-4z" fill="#aaa"/></svg></button><button aria-label="关闭泊坞窗"><svg viewBox="0 0 10 10"><path d="M1 1l8 8M9 1L1 9" stroke="#aaa" stroke-width="1.500"/></svg></button></div>
    <div class="dmain">
      <div class="dcontent">
        <div class="dtools">
          <button class="b on" aria-label="字符"><svg class="i"><use href="#bigA"/></svg></button>
          <button class="b" aria-label="段落"><svg class="i"><use href="#para"/></svg></button>
          <button class="b" aria-label="图文框"><svg class="i"><use href="#frame"/></svg></button>
          <button class="b push" aria-label="泊坞窗"><svg class="i"><use href="#dockin"/></svg></button>
          <i class="sep"></i>
          <button class="b on" aria-label="显示选项"><svg class="i"><use href="#boxeye"/></svg></button>
        </div>
        <div class="dscroll">
          <div class="sections">
            <section>
              <h3><svg class="tri"><use href="#triup"/></svg>字符<svg class="g push"><use href="#gear"/></svg><i class="q"></i></h3>
              <div class="row wide"><div class="combo split w164"><select aria-label="字体"><option>Arial</option></select><span><svg><use href="#tri"/></svg></span></div><i class="q"></i><span class="num w65 push"><input value="12.0 pt" aria-label="字号"><svg><use href="#spin"/></svg></span><i class="q"></i></div>
              <div class="row wide"><div class="combo w164"><select aria-label="字体样式"><option>常规</option></select><span><svg><use href="#tri"/></svg></span></div><i class="q"></i><button class="b faint fly push" aria-label="可变字体"><svg class="i"><use href="#AA"/></svg></button><i class="q"></i></div>
              <div class="row gapped"><svg class="i"><use href="#kern"/></svg><span class="num w145 disabled"><input aria-label="字距" disabled><svg><use href="#spin"/></svg></span><i class="q"></i><button class="b fly push" aria-label="下划线"><svg class="i"><use href="#under"/></svg></button><i class="q"></i></div>
              <div class="row"><svg class="i"><use href="#fillA"/></svg><div class="combo w145"><select aria-label="填充类型"><option>均匀填充</option></select><span><svg><use href="#tri"/></svg></span></div><button class="sw" aria-label="文本颜色"><b class="ink"></b><span><svg><use href="#tri"/></svg></span></button><button class="b push" aria-label="填充设置"><svg class="i"><use href="#dots"/></svg></button><i class="q"></i></div>
              <div class="row"><span class="i ab">ab</span><div class="combo w145"><select aria-label="背景填充类型"><option>无填充</option></select><span><svg><use href="#tri"/></svg></span></div><button class="sw" aria-label="文本背景颜色"><b class="black"></b><span><svg><use href="#tri"/></svg></span></button><button class="b push" aria-label="背景设置"><svg class="i"><use href="#dots"/></svg></button><i class="q"></i></div>
              <div class="row"><svg class="i"><use href="#lineA"/></svg><div class="combo split w145"><select aria-label="轮廓宽度"><option>无</option></select><span><svg><use href="#tri"/></svg></span></div><button class="sw" aria-label="轮廓颜色"><b class="slash"></b><span><svg><use href="#tri"/></svg></span></button><button class="b push" aria-label="轮廓设置"><svg class="i"><use href="#dots"/></svg></button><i class="q"></i></div>
              <button class="more gapped" aria-label="更多字符选项"><svg><use href="#tri"/></svg></button>
            </section>
            <section>
              <h3><svg class="tri"><use href="#triup"/></svg>段落<svg class="g push"><use href="#gear"/></svg><i class="q"></i></h3>
              <div class="row wide aligns"><button class="b on" aria-label="无对齐"><svg class="i"><use href="#alnone"/></svg></button><button class="b" aria-label="左对齐"><svg class="i"><use href="#alleft"/></svg></button><button class="b" aria-label="居中"><svg class="i"><use href="#alcenter"/></svg></button><button class="b" aria-label="右对齐"><svg class="i"><use href="#alright"/></svg></button><button class="b" aria-label="两端对齐"><svg class="i"><use href="#alfull"/></svg></button><button class="b" aria-label="强制对齐"><svg class="i"><use href="#alforce"/></svg></button><i class="q push"></i></div>
              <div class="row gapped"><svg class="i"><use href="#leading"/></svg><span class="num w96"><input value="100.0 %" aria-label="行间距"><svg><use href="#spin"/></svg></span><i class="q"></i><div class="combo w114 push"><select aria-label="间距单位"><option>%字符高度</option></select><span><svg><use href="#tri"/></svg></span></div><i class="q"></i></div>
              <div class="row gapped"><svg class="i"><use href="#indl"/></svg><span class="num w96"><input value="0.0 mm" aria-label="左缩进"><svg><use href="#spin"/></svg></span><i class="q"></i><svg class="i push"><use href="#spb"/></svg><span class="num w96"><input value="100.0 %" aria-label="段前间距"><svg><use href="#spin"/></svg></span><i class="q"></i></div>
              <div class="row"><svg class="i"><use href="#indf"/></svg><span class="num w96"><input value="0.0 mm" aria-label="首行缩进"><svg><use href="#spin"/></svg></span><i class="q"></i><svg class="i push"><use href="#spa"/></svg><span class="num w96"><input value="0.0 %" aria-label="段后间距"><svg><use href="#spin"/></svg></span><i class="q"></i></div>
              <div class="row"><svg class="i"><use href="#indr"/></svg><span class="num w96"><input value="0.0 mm" aria-label="右缩进"><svg><use href="#spin"/></svg></span><i class="q"></i></div>
              <button class="more" aria-label="更多段落选项"><svg><use href="#tri"/></svg></button>
            </section>
            <section>
              <h3><svg class="tri"><use href="#triup"/></svg>图文框<i class="q push"></i></h3>
              <div class="row"><svg class="i"><use href="#frfill"/></svg><button class="sw flush" aria-label="图文框填充"><b class="slash"></b><span><svg><use href="#tri"/></svg></span></button><i class="q"></i><button class="b col3" aria-label="与基线对齐"><svg class="i"><use href="#baseA"/></svg></button><i class="q"></i><button class="b fly col4" aria-label="垂直对齐"><svg class="i"><use href="#valign"/></svg></button><i class="q"></i></div>
              <div class="row"><svg class="i"><use href="#cols"/></svg><span class="num w53"><input value="1" aria-label="栏数"><svg><use href="#spin"/></svg></span><i class="q"></i><button class="b faint col3" aria-label="栏宽相等"><svg class="i"><use href="#cols2"/></svg></button><i class="q"></i><button class="b push" aria-label="栏设置"><svg class="i"><use href="#dots"/></svg></button><i class="q"></i></div>
            </section>
          </div>
          <div class="dbar"><svg><use href="#chevup"/></svg></div>
        </div>
      </div>
      <div class="dtabs">
        <button class="dtab"><svg viewBox="0 0 18 18"><path d="M1 10l3.500-9L8 10M2 7h5" fill="none" stroke="#333"/><use href="#gear" x="9" y="9" width="9" height="9"/></svg><span>文本</span></button>
        <button class="dadd" aria-label="添加泊坞窗"><svg class="i small"><use href="#plus"/></svg></button>
      </div>
    </div>
  </aside>

  <aside class="palette">
    <svg class="handle" viewBox="0 0 16 6"><path d="M0 .5h16M0 4.500h16" stroke="#aaa" stroke-dasharray="1 3"/><path d="M2 2.500h14" stroke="#aaa" stroke-dasharray="1 3"/></svg>
    <button aria-label="选项"><svg class="g7"><use href="#triright"/></svg></button>
    <button aria-label="滴管"><svg class="drop gc"><use href="#dropperflat"/></svg></button>
    <button aria-label="向上滚动"><svg class="gc"><use href="#chevup"/></svg></button>
    <div class="swatches"><i class="none"></i><i style="background:#231815"></i><i style="background:#3e3a39"></i><i style="background:#595757"></i><i style="background:#727171"></i><i style="background:#898989"></i><i style="background:#9fa0a0"></i><i style="background:#b5b5b6"></i><i style="background:#c9caca"></i><i style="background:#dcdddd"></i><i style="background:#efefef"></i><i style="background:#fff"></i><i style="background:#1d2088"></i><i style="background:#00a0e9"></i><i style="background:#009944"></i><i style="background:#fff100"></i><i style="background:#e60012"></i><i style="background:#e4007f"></i><i style="background:#ae3f82"></i><i style="background:#f08300"></i><i style="background:#f4b0b2"></i><i style="background:#87746a"></i><i style="background:#d0cce6"></i><i style="background:#a698cc"></i><i style="background:#6e8bc8"></i><i style="background:#7968b0"></i><i style="background:#8c80ae"></i><i style="background:#4b628f"></i><i style="background:#5a5070"></i><i style="background:#7088a3"></i><i style="background:#008fdc"></i><i style="background:#a0d8f6"></i><i style="background:#b5cad8"></i><i style="background:#95a6af"></i><i style="background:#6e7e87"></i><i style="background:#485058"></i><i style="background:#4f7471"></i><i style="background:#428a78"></i><i style="background:#719998"></i><i style="background:#52a896"></i><i style="background:#5aa86f"></i><i style="background:#5bc0ce"></i><i style="background:#4ea8b5"></i><i style="background:#b7cbbd"></i><i style="background:#c4e0cc"></i><i style="background:#a5d8b4"></i></div>
  </aside>
</main>

<footer class="status">
  <button class="b fly" aria-label="状态选项"><svg class="i"><use href="#gear"/></svg></button>
  <span class="hint">单击并拖动可扭曲选定部分</span>
  <div class="objinfo">
    <svg class="i"><use href="#bucket"/></svg><i class="none"></i><span>无</span>
    <svg class="i pen"><use href="#nib"/></svg><i class="grey-sw"></i><span class="cmyk"><span>C:</span><span>0 M:</span><span>0 Y:</span><span>0 K:</span><span>100</span></span>
  </div>
</footer>
<div class="taskbar"><i></i></div>

<div class="ime">EN <svg viewBox="0 0 12 12"><path d="M5 1q5 4 0 9h-4q8 3 10-3Q11 1 5 1z" fill="none" stroke="#444"/></svg> 简</div>

<div class="mark">
  <div class="marktext"><strong>电脑技术网</strong><span>www.tagxp.com</span></div>
  <div class="tag">TAG</div>
  <div class="ghost"><svg viewBox="0 0 44 38"><path d="M2 36Q-6 14 40 2 26 8 18 16q14-6 22-2Q34 34 2 36z" fill="#1a7fe0"/></svg><p><b>极光下载站</b><span>www.xz7.com</span></p></div>
</div>
</body>
</html>
```
FILE: styles.css
```css
* { box-sizing: border-box; }
body {
  margin: 0;
  height: 100vh;
  display: flex;
  flex-direction: column;
  overflow: hidden;
  position: relative;
  background: #f3f3f3;
  color: #000;
  font: 13px/16px "Noto Sans CJK SC", "Noto Sans", sans-serif;
}
.sprite { position: absolute; width: 0; height: 0; }
button { border: 0; padding: 0; background: none; font: inherit; color: inherit; display: flex; align-items: center; justify-content: center; flex: none; }
input, select { font: inherit; color: inherit; border: 0; padding: 0; margin: 0; background: none; min-width: 0; appearance: none; outline: 0; }
select { flex: 1; padding: 0 0 2px 3px; height: 22px; }
input { flex: 1; padding: 0 0 2px 4px; height: 22px; width: 0; font-size: 12px; }
a { color: inherit; text-decoration: none; }
u { text-underline-offset: 2px; }
svg { flex: none; display: block; }
h1, h2, h3, p, ul { margin: 0; padding: 0; font-size: 13px; font-weight: 400; line-height: 16px; }
.i { width: 16px; height: 16px; color: #333; }
.small { width: 14px; height: 14px; }
.push { margin-left: auto !important; }

/* title and menu */
.titlebar { height: 21px; flex: none; background: #fff; display: flex; align-items: center; padding: 0 4px 2px 3px; gap: 5px; }
.logo { width: 16px; height: 16px; }
.winbtns { margin-left: auto; display: flex; gap: 15px; }
.winbtns button { width: 16px; }
.menubar { height: 22px; flex: none; background: #d7d7d7; display: flex; align-items: center; gap: 21px; padding: 0 0 2px 11px; }

/* toolbars */
.toolbar { display: flex; align-items: center; gap: 5px; padding-left: 4px; border-bottom: 1px solid #d5d5d5; flex: none; }
.std { height: 32px; }
.prop { height: 43px; }
.b { width: 24px; height: 24px; position: relative; }
.b.dark { background: #b2b2b2; }
.b.on { background: #fff; border: 1px solid #b0b0b0; }
.b.off, .b.off .i { color: #888; }
.faint .i, .faint svg { color: #bbb; }
.grey .i { color: #aaa; }
.fly::after { content: ""; position: absolute; right: 0; bottom: 1px; border: solid transparent; border-width: 5px 0 0 5px; border-bottom: 0; border-right: 5px solid #777; border-left: 0; }
.faint.fly::after { border-right-color: #bbb; }
.pdf { flex-direction: column; }
.pdf span { font-size: 8px; line-height: 10px; font-weight: 500; }
.pdf svg { width: 10px; height: 8px; }
.sep { width: 3px; height: 22px; flex: none; background: linear-gradient(#d5d5d5, #d5d5d5) center / 1px 100% no-repeat; }
.prop .sep { height: 38px; }
.ml { margin-left: 3px; }
.mr { margin-right: 3px; }
.caret { width: 11px; justify-content: flex-start; color: #777; }
.caret svg, .combo svg, .sw svg { width: 8px; height: 4px; }
.t { padding-bottom: 1px; }
.t.padded { padding: 0 6px 1px; }
.t.snap { padding: 0 3px 1px 6px; }
.t:disabled { color: #c4c4c4; }
.t.launch { padding-right: 10px; }
.combo { height: 24px; border: 1px solid #b0b0b0; background: #e8e8e8; display: flex; flex: none; }
.combo > span { width: 17px; display: flex; align-items: center; justify-content: center; color: #777; }
.combo.split { background: #fff; }
.combo.split > span { background: #e8e8e8; border-left: 1px solid #b0b0b0; width: 18px; }
.zoomlevel { width: 86px; }
.zoomlevel select { font-size: 12px; }
.preset { width: 97px; }
.spinfield { display: flex; align-items: center; }
.spinfield .i { margin-left: 2px; margin-right: 4px; }
.num { width: 50px; height: 24px; border: 1px solid #b0b0b0; background: #fff; display: flex; flex: none; }
.num svg { width: 18px; height: 22px; background: #e8e8e8; border-left: 1px solid #b0b0b0; color: #777; }
.num.disabled { background: #f3f3f3; border-color: #cfcfcf; }
.num.disabled svg { background: #f3f3f3; border-color: #cfcfcf; color: #ccc; }
.w65 { width: 65px; } .w53 { width: 53px; } .w96 { width: 96px; }
.w114 { width: 114px; } .w145 { width: 145px; } .w164 { width: 164px; }

/* work area */
.work { flex: 1; min-height: 0; display: flex; }
.toolbox { width: 32px; border-right: 1px solid #d0d0d0; padding: 2px 4px 0; flex: none; display: flex; flex-direction: column; }
.toolbox .b { margin: 2px 0 3px; flex: none; }
.toolbox hr { margin: 3px -1px 4px 1px; border: 0; height: 1px; background: #d0d0d0; flex: none; }
.toolbox .add { margin-top: 7px; }
.glyph { font-size: 17px; font-weight: 700; color: #333; }
.toolbox .hot { border: 1px solid #00a2ff; background: #dff0ff; }
.flyhost { position: relative; }
.flyout { position: absolute; z-index: 5; left: 25px; top: 1px; width: 148px; list-style: none; border: 1px solid #a9a9a9; padding: 2px; background: linear-gradient(90deg, #f0f0f0 26px, #fff 26px); }
.flyout li { height: 22px; display: flex; align-items: center; padding: 0 0 1px 2px; border: 1px solid transparent; }
.flyout li a { margin-left: 11px; }
.flyout .sel { border-color: #00a2ff; background: #dff0ff; }
.flyout kbd { font: inherit; font-size: 12px; margin-left: auto; padding-right: 20px; }
.cursor { position: absolute; z-index: 6; left: 110px; top: 15px; width: 13px; height: 20px; }

.doc { flex: 1; min-width: 0; display: flex; flex-direction: column; padding-right: 5px; background: linear-gradient(#d0d0d0, #d0d0d0) right 2px top / 1px 100% no-repeat; }
.tabs { height: 22px; flex: none; display: flex; background: #e9e9e9; border-bottom: 1px solid #00a2ff; margin-top: -1px; border-top: 1px solid #d5d5d5; }
.tabs button { background: #d7d7d7; padding-bottom: 2px; }
.home { width: 18px; }
.tabs .tab { width: 97px; padding-right: 14px; }
.tabs .tab.active { width: 95px; padding-right: 20px; background: #cce2ff; border-left: 1px solid #eee; }
.tabs .tabadd { width: 21px; background: #dcdcdc; padding: 0; }
.tabadd .i { color: #aaa; }
.stage { flex: 1; min-height: 0; display: grid; grid-template-columns: 18px 1fr 16px; grid-template-rows: 18px 1fr 18px; }
.corner { width: 18px; height: 18px; color: #888; }
.hruler { grid-column: 2 / 4; width: 100%; height: 18px; border-bottom: 1px solid #d0d0d0; }
.vruler { grid-row: 2 / 4; grid-column: 1; width: 18px; height: 100%; border-right: 1px solid #d0d0d0; }
.nums { font-size: 10px; fill: #888; text-anchor: middle; }
.canvas { background: #fff; display: flex; align-items: center; justify-content: center; padding: 4px 0 0 3px; }
.page { width: 458px; height: 646px; border: 1px solid #a5a5a5; background: #fff; box-shadow: 6px 4px 0 #bfbfbf; }
.vscroll { background: #fff; display: flex; flex-direction: column; }
.vscroll button { height: 16px; background: #f0f0f0; color: #444; }
.vscroll i { background: #cdcdcd; margin-top: 173px; height: 430px; margin-right: 1px; }
.vscroll svg, .hscroll svg { width: 10px; height: 10px; }
.bottom { grid-column: 2 / 4; display: flex; background: #e8e8e8; }
.pages { width: 767px; border: 1px solid #888; border-width: 1px 1px 0 0; background: #f3f3f3; display: flex; align-items: center; gap: 4px; padding-left: 2px; color: #aaa; }
.pages button { width: 12px; }
.pages button > svg { width: 12px; height: 12px; }
.pages .d { color: #555; }
.count { width: 40px; display: flex; justify-content: space-between; padding: 0 1px 2px; }
.pages button.pagetab { width: 49px; height: 18px; margin-left: 8px; display: grid; color: #000; margin-top: -1px; }
.pages .pagetab > * { grid-area: 1 / 1; }
.pages button.pagetab > svg { width: 49px; height: 18px; }
.pages .pagetab span { line-height: 16px; padding: 0 4px 2px 0; }
.grip { width: 6px; height: 14px; color: #aaa; }
.pages .grip { margin-left: auto; margin-right: 2px; }
.hscroll { flex: 1; display: flex; border-top: 1px solid #fff; padding-bottom: 1px; }
.hscroll button { width: 17px; background: #f0f0f0; color: #444; }
.hscroll i { background: #cdcdcd; width: 644px; margin-right: auto; }
.docpal { height: 21px; flex: none; border-top: 1px solid #d5d5d5; background: #f3f3f3; display: flex; align-items: center; padding-left: 2px; gap: 5px; }
.docpal svg:not(.grip), .palette button svg { width: 10px; height: 10px; }
.docpal svg.drop, .palette button svg.drop { width: 12px; height: 12px; color: #333; margin: 0 2px; }
.g7 { color: #666; }
.gc, .docpal svg.gc, .palette button svg.gc { color: #c4c4c4; }
.none { background: linear-gradient(to top left, transparent 46%, #f33 47%, #f33 53%, transparent 54%) #fff; border: 1px solid #555; }
.docpal .none { width: 18px; height: 18px; }
.docpal p { flex: 1; text-align: center; font-style: italic; color: #aaa; padding: 0 32px 2px 0; }

/* docker */
.docker { width: 313px; flex: none; display: flex; flex-direction: column; background: #e8e8e8; border-right: 1px solid #d0d0d0; }
.dhead { height: 23px; flex: none; display: flex; align-items: center; gap: 9px; padding: 0 7px 2px 6px; border-bottom: 1px solid #b0b0b0; }
.dhead h2 { margin-right: auto; }
.dhead svg { width: 10px; height: 10px; }
.dmain { flex: 1; min-height: 0; display: flex; }
.dcontent { width: 292px; display: flex; flex-direction: column; }
.dtools { height: 25px; flex: none; display: flex; align-items: center; padding: 1px 2px 0 1px; gap: 2px; }
.dtools .sep { margin-left: 1px; }
.dscroll { flex: 1; display: flex; min-height: 0; }
.sections { width: 275px; background: #f3f3f3; border-right: 1px solid #fff; }
.sections section { border-top: 2px solid #e8e8e8; }
.sections section:first-child { border-color: #f3f3f3; }
.dbar { flex: 1; background: #f0f0f0; padding: 4px 3px; color: #bbb; }
.dbar svg { width: 10px; height: 10px; }
.sections h3 { height: 24px; margin-bottom: 2px; display: flex; align-items: center; padding: 0 6px 2px 9px; font-weight: 700; }
.tri { width: 8px; height: 4px; color: #777; margin-right: 9px; }
.g { width: 9px; height: 9px; color: #333; margin-right: 5px; }
.q { width: 7px; height: 7px; border: 1px solid #d5d5d5; background: #fafafa; margin-left: 7px; flex: none; }
.row { height: 29px; display: flex; align-items: center; padding: 0 6px 0 3px; }
.row > .i { margin-right: 4px; }
.row.wide { padding-left: 4px; }
.ab { height: 12px; background: #ff6a00; color: #fff; border-right: 1px solid #333; font-size: 12px; line-height: 12px; font-weight: 700; flex: none; }
.gapped { margin-top: 8px; }
.aligns { gap: 5px; }
.sw { width: 52px; height: 24px; border: 1px solid #b0b0b0; background: #fff; margin-left: 5px; }
.sw.flush { width: 53px; margin-left: 0; }
.sw b { flex: 1; height: 16px; margin: 0 3px; }
.sw > span { width: 18px; height: 22px; border-left: 1px solid #b0b0b0; background: #e8e8e8; display: flex; align-items: center; justify-content: center; color: #777; }
.ink { background: #231815; }
.black { background: #000; }
.sw .slash { background: linear-gradient(to top left, transparent 45%, #f33 47%, #f33 53%, transparent 55%); height: 12px; margin: 0 7px; }
.col3 { margin-left: 22px; }
.col4 { margin-left: 21px; }
.more { display: flex; width: 100%; height: 18px; background: #e8e8e8; color: #777; margin-bottom: 5px; }
.row + .more { margin-top: 5px; }
.row + .more.gapped { margin-top: 13px; }
.more svg { width: 8px; height: 4px; }
.dtabs { flex: 1; border-left: 1px solid #a9a9a9; }
.dtab { width: 100%; height: 72px; background: #b0b0b0; flex-direction: column; gap: 2px; justify-content: flex-start; padding-top: 3px; }
.dtab svg { width: 18px; height: 18px; color: #333; }
.dtab span { writing-mode: vertical-rl; text-orientation: sideways; }
.dadd { width: 100%; height: 26px; }
.dadd .i { color: #aaa; }

.palette { width: 20px; flex: none; display: flex; flex-direction: column; align-items: center; padding-top: 2px; }
.palette .handle { width: 16px; height: 6px; }
.palette button { width: 18px; height: 19px; }
.palette .handle + button { margin-top: -1px; }
.swatches { border: 1px solid #555; border-bottom: 0; width: 18px; }
.swatches i { display: block; height: 17px; border: 0; border-bottom: 1px solid #555; }

/* status */
.status { height: 38px; flex: none; display: flex; align-items: center; border-top: 1px solid #d0d0d0; padding-left: 7px; gap: 5px; }
.hint { padding-bottom: 2px; }
.objinfo { margin-left: auto; width: 488px; display: flex; align-items: center; gap: 3px; }
.objinfo .none { width: 22px; height: 22px; border-color: #aaa; }
.objinfo .pen { margin-left: 142px; }
.grey-sw { width: 22px; height: 22px; background: #231815; }
.cmyk { display: flex; gap: 11px; margin-left: 3px; font-size: 12px; }
.taskbar { height: 7px; flex: none; background: #414243; }
.taskbar i { display: block; margin-left: 582px; width: 160px; height: 7px; background: #605d5d; }

/* floating overlays */
.ime { position: absolute; left: 1273px; bottom: 62px; width: 62px; height: 25px; border-radius: 6px; background: #fff; box-shadow: 0 1px 4px #333; display: flex; align-items: center; justify-content: center; gap: 4px; color: #444; }
.ime svg { width: 12px; height: 12px; }
.mark { position: absolute; right: 2px; bottom: 5px; width: 474px; height: 114px; background: rgba(255, 255, 255, .75); display: flex; }
.marktext { width: 277px; padding-left: 10px; display: flex; flex-direction: column; }
.marktext strong { font-size: 50px; line-height: 60px; color: #ff2a2d; white-space: nowrap; }
.marktext span { font: 38px/58px "Liberation Serif", serif; color: #2b7fff; white-space: nowrap; -webkit-text-stroke: 1px #2b7fff; padding-left: 1px; }
.tag { width: 190px; height: 114px; border-radius: 26px; background: rgba(15, 110, 255, .88); color: #fff; font-size: 92px; font-weight: 700; line-height: 98px; text-align: center; }
.ghost { position: absolute; right: 7px; bottom: 2px; display: flex; gap: 2px; opacity: .3; color: #1a6fc0; }
.ghost svg { width: 44px; height: 38px; }
.ghost p { display: flex; flex-direction: column; }
.ghost b { font-size: 21px; line-height: 26px; }
.ghost span { font: 17px/18px "Liberation Sans", sans-serif; }
```
